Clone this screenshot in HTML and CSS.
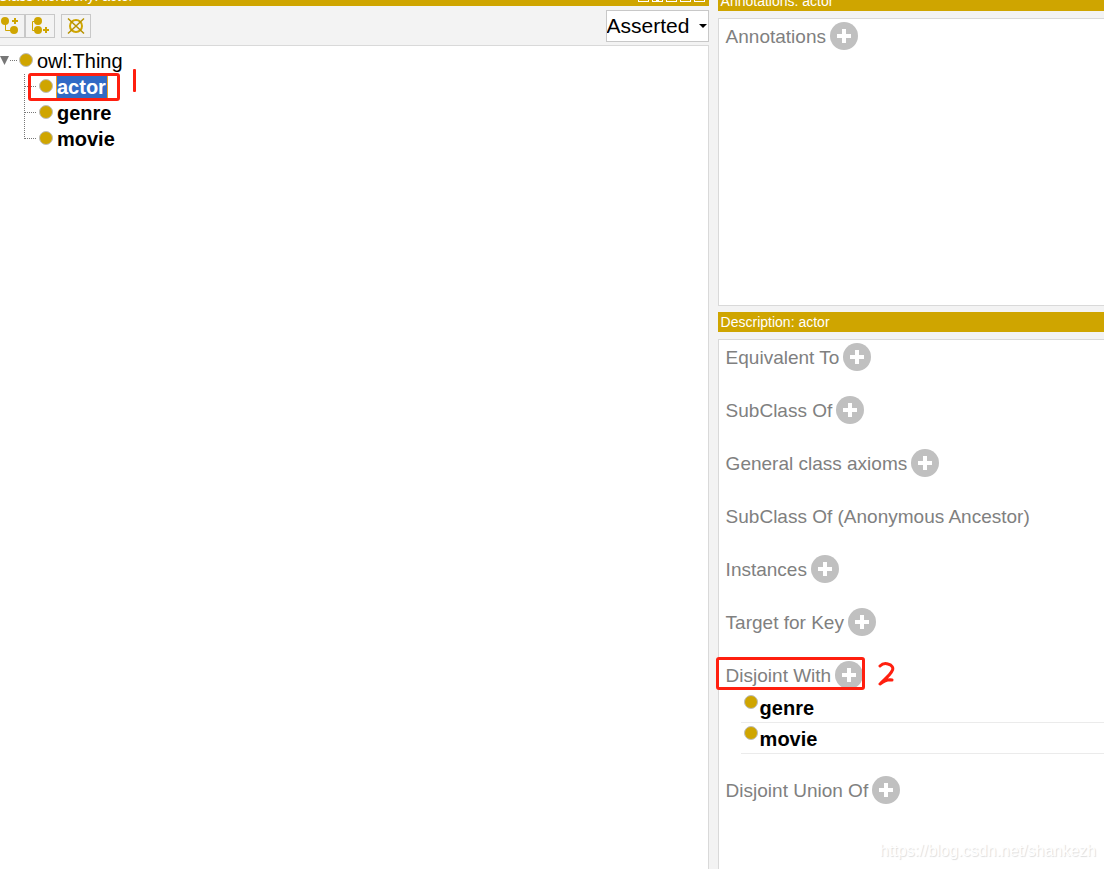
FILE: index.html
```html
<!DOCTYPE html>
<html lang="en">

<head>
    <meta charset="utf-8">
    <title>Class hierarchy: actor</title>
    <link rel="stylesheet" href="styles.css">
</head>

<body>

<svg class="defs" width="0" height="0" aria-hidden="true">
    <symbol id="plus" viewBox="0 0 28 28">
        <circle cx="14" cy="14" r="14" fill="#c0c0c0"/>
        <path d="M12 7h4v5h5v4h-5v5h-4v-5H7v-4h5z" fill="#fff"/>
    </symbol>
    <symbol id="class" viewBox="0 0 14 14">
        <circle cx="7" cy="7" r="6.5" fill="#cfa500" stroke="#bdbdbd"/>
    </symbol>
</svg>

<div class="workspace">

    <!-- class tree -->
    <section class="panel hierarchy">
        <header class="title-bar">
            <h2>Class hierarchy: actor</h2>
            <div class="window-buttons">
                <button type="button" aria-label="Split horizontally"></button>
                <button type="button" class="split" aria-label="Split vertically"></button>
                <button type="button" aria-label="Float"></button>
                <button type="button" aria-label="Maximise"></button>
                <button type="button" aria-label="Close"></button>
            </div>
        </header>

        <div class="toolbar">
            <button type="button" class="tool" aria-label="Add subclass">
                <svg width="28" height="22" viewBox="0 0 28 22">
                    <path d="M9.500 8v7.500H16" fill="none" stroke="#cfa500"/>
                    <circle cx="9" cy="6" r="4" fill="#cfa500"/>
                    <circle cx="18" cy="15" r="4" fill="#cfa500"/>
                    <path d="M18 3h2v2h2v2h-2v2h-2V7h-2V5h2z" fill="#cfa500"/>
                </svg>
            </button>
            <button type="button" class="tool" aria-label="Add sibling class">
                <svg width="28" height="22" viewBox="0 0 28 22">
                    <path d="M10 6.500H6.500v9H10" fill="none" stroke="#cfa500"/>
                    <circle cx="12" cy="6" r="4" fill="#cfa500"/>
                    <circle cx="12" cy="15" r="4" fill="#cfa500"/>
                    <path d="M19 12h2v2h2v2h-2v2h-2v-2h-2v-2h2z" fill="#cfa500"/>
                </svg>
            </button>
            <button type="button" class="tool delete" aria-label="Delete class">
                <svg width="28" height="22" viewBox="0 0 28 22">
                    <circle cx="14" cy="11" r="6" fill="none" stroke="#cfa500" stroke-width="2"/>
                    <path d="M6 3.500l16 15M22 3.500l-16 15" stroke="#b89200" stroke-width="1.500"/>
                </svg>
            </button>
            <div class="mode">
                <select aria-label="Hierarchy mode">
                    <option>Asserted</option>
                    <option>Inferred</option>
                </select>
                <svg class="arrow" width="8" height="4" viewBox="0 0 8 4"><path d="M0 0h8L4 4z"/></svg>
            </div>
        </div>

        <div class="box tree">
            <div class="node">
                <svg class="toggle" width="17" height="14" viewBox="0 0 17 14">
                    <path d="M0 2h9L4.500 11z" fill="#777"/>
                    <path d="M10 6.500h7" stroke="#777" stroke-dasharray="1 1"/>
                </svg>
                <svg class="dot" width="14" height="14"><use href="#class"/></svg>
                <span>owl:Thing</span>
            </div>
            <ul class="children">
                <li class="node">
                    <svg class="dot" width="14" height="14"><use href="#class"/></svg>
                    <b class="selected">actor</b>
                    <span class="mark mark-actor"></span>
                    <span class="mark-one"></span>
                </li>
                <li class="node">
                    <svg class="dot" width="14" height="14"><use href="#class"/></svg>
                    <b>genre</b>
                </li>
                <li class="node">
                    <svg class="dot" width="14" height="14"><use href="#class"/></svg>
                    <b>movie</b>
                </li>
            </ul>
        </div>
    </section>

    <div class="side">
        <section class="panel">
            <header class="title-bar"><h2>Annotations: actor</h2></header>
            <div class="box annotations">
                <div class="heading">
                    <h3>Annotations</h3>
                    <button type="button" class="add" aria-label="Add annotation"><svg width="28" height="28"><use href="#plus"/></svg></button>
                </div>
            </div>
        </section>

        <section class="panel description">
            <header class="title-bar"><h2>Description: actor</h2></header>
            <div class="box">
                <div class="group">
                    <div class="heading">
                        <h3>Equivalent To</h3>
                        <button type="button" class="add" aria-label="Add equivalent class"><svg width="28" height="28"><use href="#plus"/></svg></button>
                    </div>
                </div>
                <div class="group">
                    <div class="heading">
                        <h3>SubClass Of</h3>
                        <button type="button" class="add" aria-label="Add superclass"><svg width="28" height="28"><use href="#plus"/></svg></button>
                    </div>
                </div>
                <div class="group">
                    <div class="heading">
                        <h3>General class axioms</h3>
                        <button type="button" class="add" aria-label="Add general class axiom"><svg width="28" height="28"><use href="#plus"/></svg></button>
                    </div>
                </div>
                <div class="group">
                    <div class="heading">
                        <h3>SubClass Of (Anonymous Ancestor)</h3>
                    </div>
                </div>
                <div class="group">
                    <div class="heading">
                        <h3>Instances</h3>
                        <button type="button" class="add" aria-label="Add instance"><svg width="28" height="28"><use href="#plus"/></svg></button>
                    </div>
                </div>
                <div class="group">
                    <div class="heading">
                        <h3>Target for Key</h3>
                        <button type="button" class="add" aria-label="Add key"><svg width="28" height="28"><use href="#plus"/></svg></button>
                    </div>
                </div>
                <div class="group">
                    <div class="heading">
                        <h3>Disjoint With</h3>
                        <button type="button" class="add" aria-label="Add disjoint class"><svg width="28" height="28"><use href="#plus"/></svg></button>
                        <span class="mark mark-disjoint"></span>
                        <svg class="mark-two" width="18" height="24" viewBox="0 0 18 24">
                            <path d="M2 4C4 2 7 1 10 2c4 1 6 4 4 7-2 4-6 7-12 13 4-3 8-5 12-4M8 18h6" fill="none" stroke="#ff1f0f" stroke-width="3" stroke-linecap="round" stroke-linejoin="round"/>
                        </svg>
                    </div>
                    <ul class="items">
                        <li>
                            <svg width="14" height="14"><use href="#class"/></svg>
                            <b>genre</b>
                        </li>
                        <li>
                            <svg width="14" height="14"><use href="#class"/></svg>
                            <b>movie</b>
                        </li>
                    </ul>
                </div>
                <div class="group">
                    <div class="heading">
                        <h3>Disjoint Union Of</h3>
                        <button type="button" class="add" aria-label="Add disjoint union"><svg width="28" height="28"><use href="#plus"/></svg></button>
                    </div>
                </div>
            </div>
        </section>
    </div>
</div>

<div class="watermark">https://blog.csdn.net/shankezh</div>

</body>

</html>
```

FILE: styles.css
```css
* {
    box-sizing: border-box;
}

body {
    margin: 0;
    height: 100vh;
    overflow: hidden;
    background-color: #f3f3f3;
    color: #000;
    font-family: "Liberation Sans", Arial, sans-serif;
    font-size: 20px;
}

h2, h3, ul {
    margin: 0;
    padding: 0;
    font-weight: normal;
    list-style: none;
}

button {
    padding: 0;
    border: 0;
    background: none;
}

svg {
    display: block;
    flex: none;
}

.defs {
    position: absolute;
}

.workspace {
    display: flex;
    gap: 9px;
    height: 100vh;
}

.panel {
    display: flex;
    flex-direction: column;
}

.hierarchy {
    flex: 1;
    margin: -14px 0 0 -5px;
}

.side {
    display: flex;
    flex-direction: column;
    gap: 6px;
    width: 35%;
    margin-top: -9px;
}

.description {
    flex: 1;
}

.title-bar {
    display: flex;
    justify-content: space-between;
    align-items: center;
    height: 20px;
    padding: 0 4px 0 3px;
    background-color: #cfa500;
    color: #fff;
}

.title-bar h2 {
    font-size: 14px;
    line-height: 20px;
}

.window-buttons {
    display: flex;
    gap: 3px;
}

.window-buttons button {
    width: 11px;
    height: 11px;
    border: 1px solid #fff;
}

.window-buttons .split {
    background: linear-gradient(#fff, #fff) center / 3px 100% no-repeat;
}

.toolbar {
    display: flex;
    align-items: center;
    height: 39px;
}

.tool {
    width: 30px;
    height: 24px;
    border: 1px solid #c8c8c8;
}

.delete {
    margin-left: 6px;
}

.mode {
    position: relative;
    margin-left: auto;
}

.mode select {
    display: block;
    width: 103px;
    height: 32px;
    padding: 0;
    border: 1px solid #c8c8c8;
    border-radius: 0;
    background-color: #fff;
    color: #000;
    font-family: inherit;
    font-size: 21px;
    appearance: none;
}

.arrow {
    position: absolute;
    top: 14px;
    right: 2px;
}

.box {
    border: 1px solid #d9d9d9;
    background-color: #fff;
}

.side .box {
    margin-top: 7px;
    padding: 3px 7px;
    border-right: 0;
}

.annotations {
    min-height: 288px;
}

.description .box {
    flex: 1;
    border-bottom: 0;
}

.tree {
    flex: 1;
    padding: 2px 4px;
    border-bottom: 0;
}

.node {
    display: flex;
    align-items: center;
    position: relative;
    height: 26px;
    line-height: 22px;
}

.toggle {
    margin-right: 2px;
}

.dot {
    margin: 0 4px 2px 0;
}

.children {
    position: relative;
    padding-left: 24px;
}

.children::before {
    content: "";
    position: absolute;
    top: 0;
    bottom: 13px;
    left: 24px;
    border-left: 1px dotted #777;
}

.children .node {
    padding-left: 15px;
}

.children .node::before {
    content: "";
    position: absolute;
    top: 12px;
    left: 0;
    width: 12px;
    border-top: 1px dotted #777;
}

.selected {
    margin-left: -1px;
    padding-right: 1px;
    border: 1px solid #f0a020;
    border-width: 0 1px;
    background-color: #316ac5;
    color: #fff;
}

.heading {
    display: flex;
    gap: 4px;
    position: relative;
    width: fit-content;
    height: 31px;
}

.heading h3 {
    color: #808080;
    font-size: 19px;
    line-height: 30px;
}

.add {
    height: 28px;
}

.group {
    margin-bottom: 22px;
}

.items {
    margin: 0 -7px 0 15px;
}

.items li {
    display: flex;
    gap: 2px;
    height: 31px;
    padding: 3px;
    border-bottom: 1px solid #ebebeb;
    line-height: 26px;
}

/* red pen marks */
.mark {
    position: absolute;
    border: 3px solid #ff1f0f;
    border-radius: 3px;
}

.mark-actor {
    top: -1px;
    left: 4px;
    width: 92px;
    height: 28px;
}

.mark-one {
    position: absolute;
    top: -5px;
    left: 109px;
    width: 3px;
    height: 23px;
    border-radius: 1px;
    background-color: #ff1f0f;
}

.mark-disjoint {
    top: -4px;
    left: -10px;
    right: -2px;
    height: 33px;
}

.mark-two {
    position: absolute;
    top: 1px;
    left: calc(100% + 15px);
}

.watermark {
    position: absolute;
    right: 8px;
    bottom: 9px;
    color: #fff;
    font-size: 16px;
    line-height: 18px;
    text-shadow: 1px 1px 1px #ddd;
}
```
